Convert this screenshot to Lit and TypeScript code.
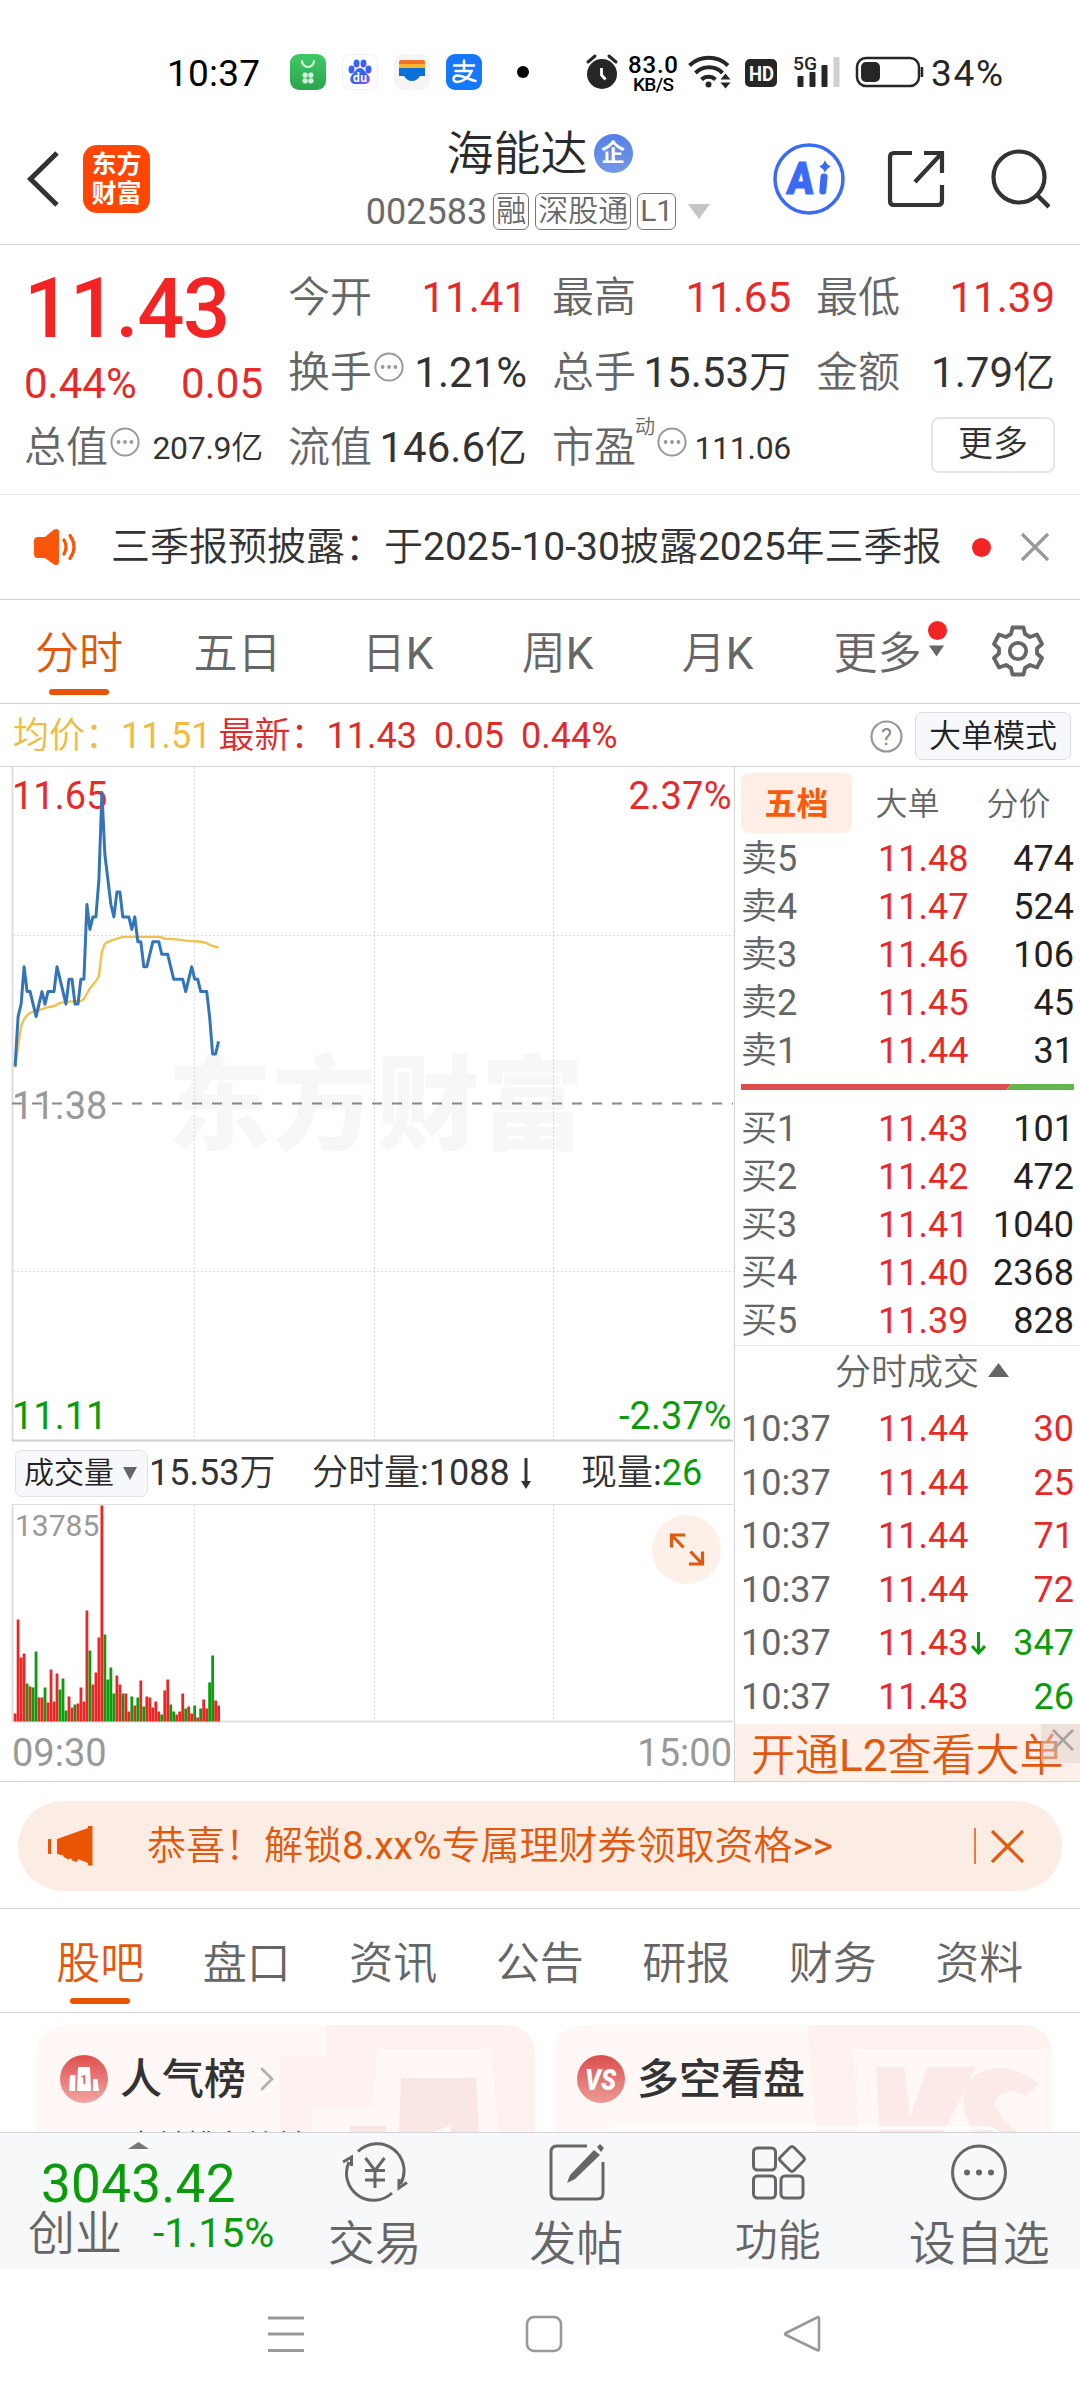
import { LitElement, html, svg, css } from "lit";
import { customElement } from "lit/decorators.js";
import { classMap } from "lit/directives/class-map.js";

const ASKS = [["卖5", "11.48", "474"], ["卖4", "11.47", "524"], ["卖3", "11.46", "106"], ["卖2", "11.45", "45"], ["卖1", "11.44", "31"]];
const BIDS = [["买1", "11.43", "101"], ["买2", "11.42", "472"], ["买3", "11.41", "1040"], ["买4", "11.40", "2368"], ["买5", "11.39", "828"]];
const TRADES: [string, string, string, boolean, boolean][] = [
  ["10:37", "11.44", "30", true, false],
  ["10:37", "11.44", "25", true, false],
  ["10:37", "11.44", "71", true, false],
  ["10:37", "11.44", "72", true, false],
  ["10:37", "11.43", "347", false, true],
  ["10:37", "11.43", "26", false, false],
];

/* Minute prices, in cents above the previous close of 11.38. */
const PRICE = [
  3, 7, 8, 11, 9, 9, 8, 7, 8, 9, 8, 9, 9, 9, 11, 10, 9, 8, 10, 10, 8, 8, 10, 10, 16, 14, 15, 15, 18, 25, 20, 18, 16, 15,
  17, 17, 15, 15, 15, 14, 15, 13, 13, 11, 11, 12, 13, 13, 13, 12, 12, 12, 11, 10, 10, 10, 10, 9, 10, 11, 10, 10, 9, 9, 9,
  7, 4, 4, 5,
];
/* Average price as [minute, cents above close]. */
const AVERAGE = [
  [0, 2.9], [1, 4.6], [2, 6.2], [3, 6.8], [4, 7.1], [5, 7.3], [7, 7.45], [9, 7.6], [11, 7.75], [13, 7.85], [15, 8.1],
  [18, 8.2], [22, 8.25], [23, 8.4], [24, 8.85], [25, 9.25], [27, 9.85], [28, 10.25], [29, 12.2], [30, 12.85], [32, 13.1],
  [34, 13.25], [36, 13.4], [40, 13.4], [48.5, 13.4], [50, 13.25], [54, 13.2], [57, 13.1], [62, 13.0], [64, 12.9],
  [66, 12.65], [68, 12.55],
];
/* Volume bar heights in pixels; negative values are falling minutes. */
const VOLUME = [
  8, 102, 64, 68, -38, 35, -34, -70, 24, 24, -34, 19, 52, 20, 48, -32, -43, -11, 25, 14, -17, 18, 34, 20, 111, -71, 37, 49,
  84, 216, -87, -42, -54, -28, 46, 37, -28, 28, 10, -25, 16, -24, 41, -15, 25, 24, 14, 20, 10, -7, 31, 42, -17, -10, 7, 10,
  28, -13, 15, 8, -16, 4, -13, 22, 13, -39, -66, 21, 16,
];

const minuteX = (i: number) => 15.1 + i * 2.993;
const priceY = (c: number) => 336.7 - c * 12.45;
const line = (pts: number[][]) => pts.map(([i, c]) => `${minuteX(i).toFixed(1)},${priceY(c).toFixed(1)}`).join(" ");

const more = html`<svg class="dots" width="30" height="30" viewBox="0 0 30 30"><circle cx="15" cy="15" r="13.6" fill="none" stroke="#999" stroke-width="2"/><g fill="#999"><circle cx="8.6" cy="15" r="1.9"/><circle cx="15" cy="15" r="1.9"/><circle cx="21.4" cy="15" r="1.9"/></g></svg>`;

@customElement("app-root")
export class AppRoot extends LitElement {
  static styles = css`
    :host {
      display: block;
      width: 1080px;
      height: 2400px;
      overflow: hidden;
      background: #fff;
      color: #333;
      font-family: Roboto, "Noto Sans CJK SC DemiLight", "Noto Sans CJK SC", sans-serif;
      font-size: 36px;
      line-height: 1;
    }
    * { box-sizing: border-box; }
    svg { display: block; flex: none; }
    .logo, .badge, .top, .levels .on, .watermark { font-family: Roboto, "Noto Sans CJK SC", sans-serif; }
    .red { color: #e62a2a; }
    .green { color: #0a9c0a; }
    .grow { flex: 1; }

    .status { height: 118px; }
    .header { height: 127px; display: flex; align-items: center; border-bottom: 1px solid #d4d4d4; padding: 0 28px 5px 26px; }
    .logo { margin-left: 23px; width: 67px; height: 68px; border-radius: 14px; background: #ff4605; color: #fff; display: flex; flex-direction: column; align-items: center; justify-content: center; font-size: 25px; font-weight: 700; line-height: 29px; }
    .heading { width: 620px; display: flex; flex-direction: column; align-items: center; padding: 4px 0 0 156px; }
    .name { display: flex; align-items: center; font-size: 47px; line-height: 60px; color: #2a2a2a; gap: 6px; margin-left: 3px; height: 62px; }
    .badge { width: 39px; height: 39px; border-radius: 50%; background: linear-gradient(#5480e8, #7398e6); color: #fff; font-size: 24px; line-height: 38px; text-align: center; font-weight: 700; }
    .code { display: flex; align-items: center; height: 54px; color: #6a6a6a; gap: 6px; white-space: nowrap; }
    .tag { font-size: 30px; border: 1.5px solid #777; border-radius: 6px; height: 37px; line-height: 34px; padding: 0 2px; }
    .code svg { margin-left: 6px; }
    .ai { margin-left: 3px; }
    .share { margin-left: 41px; }
    .search { margin-left: 44px; }

    .quote { height: 250px; border-bottom: 1px solid #e6e6e6; padding: 15px 26px 0 24px; display: grid; grid-template-columns: repeat(4, 239px); column-gap: 25px; grid-template-rows: repeat(3, 75px); font-size: 42px; }
    .lead { grid-row: span 2; display: flex; flex-direction: column; }
    .last { font-size: 83px; font-weight: 500; color: #f32424; line-height: 90px; height: 98px; padding-top: 4px; margin-left: 0; letter-spacing: -1.4px; }
    .pair, .cell { display: flex; justify-content: space-between; align-items: center; }
    .pair { height: 52px; }
    .cell .label { display: flex; align-items: center; color: #666; }
    .cell .value { white-space: nowrap; }
    .cell .dots { margin: -11px 0 0 2px; }
    .cell .sm { font-size: 32px; letter-spacing: -0.3px; }
    .cell sup { font-size: 20px; line-height: 20px; margin: -42px 0 0 -1px; }
    .cell.end { justify-content: flex-end; }
    .button { width: 124px; height: 56px; border: 2px solid #e6e6e6; border-radius: 8px; font-size: 35px; line-height: 52px; text-align: center; margin-top: -6px; }

    .notice { height: 105px; border-bottom: 1px solid #d4d4d4; display: flex; align-items: center; padding: 0 30px 0 34px; font-size: 39px; }
    .notice .msg { margin-left: 34px; white-space: nowrap; }
    .notice .dot { width: 19px; height: 19px; border-radius: 50%; background: #f32424; margin: 0 29px 0 auto; }

    .tabs { height: 104px; border-bottom: 1px solid #d4d4d4; display: flex; font-size: 44px; color: #666; }
    .upper { padding-left: 0; margin-left: -1px; width: 1081px; }
    .tab { width: 160px; position: relative; line-height: 108px; text-align: center; white-space: nowrap; flex: none; }
    .upper .tab:nth-child(n + 2) { left: -1.5px; }
    .tab.on { color: #e0590f; }
    .tab.on::after { content: ""; position: absolute; left: 50%; margin-left: -30px; top: 89px; width: 60px; height: 6px; border-radius: 3px; background: #e85405; }
    .tab .mark { position: absolute; left: 130px; top: 20px; }
    .gear { margin: 25px 0 0 33px; }
    .tabs.lower { padding-left: 27px; }
    .tabs.lower .tab { width: 146.5px; line-height: 110px; }

    .info { height: 63px; border-bottom: 1px solid #d4d4d4; display: flex; align-items: center; padding: 2px 9px 0 13px; color: #df2b2b; white-space: pre; }
    .info .avg { color: #f0bb40; margin-right: 7px; }
    .info .num { margin-right: 17px; }
    .info .mode { margin-left: 12px; width: 156px; height: 48px; border: 1.5px solid #dcdee3; background: #f7f8fb; border-radius: 7px; font-size: 32px; line-height: 46px; text-align: center; color: #222; }

    .main { height: 1015px; display: flex; border-bottom: 1px solid #d4d4d4; }
    .charts { width: 734px; display: flex; flex-direction: column; }
    .bar { height: 61px; display: flex; align-items: center; padding-left: 15px; white-space: nowrap; padding-top: 1px; }
    .pick { width: 133px; height: 47px; border: 1.5px solid #dfe1e7; background: #f7f8fb; border-radius: 7px; display: flex; align-items: center; font-size: 30px; padding-left: 8px; gap: 9px; color: #222; }
    .bar .total { width: 164px; padding-left: 1px; }
    .bar .minute { width: 269px; display: flex; align-items: center; gap: 10px; }
    .axis { display: flex; justify-content: space-between; font-size: 38px; color: #999; padding: 11px 2px 0 12px; line-height: 39px; }
    .side { width: 346px; border-left: 1px solid #d4d4d4; display: flex; flex-direction: column; }
    .levels { display: flex; height: 70px; padding: 6px 0 0 6px; font-size: 32px; line-height: 63px; color: #666; text-align: center; }
    .levels div { width: 111px; height: 60px; }
    .levels .on { background: #ffeee6; color: #fb5a0c; font-weight: 700; border-radius: 8px; }
    .row { height: 48px; display: grid; grid-template-columns: 130px 105px 98px; align-items: center; padding-left: 6px; color: #666; }
    .row .p { padding-left: 7px; display: flex; align-items: center; gap: 3px; }
    .row .q { text-align: right; color: #222; }
    .row .q.red { color: #e62a2a; }
    .row .q.green { color: #0a9c0a; }
    .ratio { margin: 9px 0 15px 6px; }
    .bids { height: 241px; border-bottom: 1px solid #e6e6e6; }
    .deal { height: 58px; display: flex; align-items: center; gap: 9px; padding: 0 0 2px 100px; color: #666; }
    .deal svg { margin-top: -6px; }
    .trades .row { height: 53.6px; }
    .upsell { margin-top: auto; height: 59px; background: #fdf0ea; color: #e0590f; font-size: 44px; line-height: 64px; padding-left: 16px; position: relative; white-space: nowrap; overflow: hidden; }
    .upsell svg { position: absolute; right: 0; top: 0; }

    .promo { height: 127px; border-bottom: 1px solid #d4d4d4; padding: 19px 18px; }
    .pill { height: 90px; border-radius: 45px; background: #fcede4; color: #e0590f; font-size: 39px; display: flex; align-items: center; padding: 0 38px 0 30px; white-space: nowrap; }
    .pill .txt { margin-left: 54px; }

    .cards { height: 120px; overflow: hidden; border-bottom: 1px solid #cfd2d6; padding: 12px 28px 0 36px; display: flex; gap: 18px; }
    .card { width: 499px; height: 190px; border-radius: 28px; background: #fff8f6; position: relative; overflow: hidden; flex: none; }
    .card .art { position: absolute; left: 0; top: 0; }
    .card .top { position: relative; display: flex; align-items: center; padding: 30px 0 0 24px; height: 78px; font-size: 42px; font-weight: 500; }
    .card .top .t { margin: 0 14px 0 12px; padding-top: 2px; }
    .card .sub { position: relative; font-size: 30px; line-height: 30px; padding: 28px 0 0 90px; color: #444; }

    .nav { height: 136px; background: #f7f8fa; display: flex; color: #666; }
    .index { width: 274px; padding: 9px 0 0 28px; }
    .index .tri { margin: 0 0 0 100px; }
    .index .pt { font-size: 53px; line-height: 53px; margin: 9px 0 0 13px; letter-spacing: 0.3px; }
    .index .chg { display: flex; align-items: center; font-size: 47px; height: 48px; gap: 31px; white-space: nowrap; margin-top: -2px; }
    .index .chg .green { font-size: 41px; padding-top: 1px; }
    .item { width: 201.5px; display: flex; flex-direction: column; align-items: center; font-size: 47px; padding-top: 9px; white-space: nowrap; }
    .item svg { height: 60px; }
    .item span { line-height: 50px; margin-top: 17px; }
    .item .s { font-size: 43px; margin-top: 14px; }
    .sys { height: 131px; display: flex; padding: 46px 0 0 267px; gap: 220px; }
  `;

  private statusBar() {
    return html`<svg class="status" width="1080" height="118" viewBox="0 0 1080 118" font-family="Roboto, sans-serif">
      <defs>
        <linearGradient id="g1" x1="0" y1="0" x2="0" y2="1"><stop offset="0" stop-color="#3fca66"/><stop offset="1" stop-color="#2aa54c"/></linearGradient>
        <linearGradient id="g2" x1="0" y1="0" x2="1" y2="1"><stop offset="0" stop-color="#1d7cf2"/><stop offset=".6" stop-color="#3a5cf5"/><stop offset="1" stop-color="#b04be8"/></linearGradient>
      </defs>
      <text x="167" y="86" font-size="37" textLength="93" fill="#000">10:37</text>
      <rect x="290" y="54" width="36" height="36" rx="9" fill="url(#g1)"/>
      <path d="M302 61a6 6 0 0 0 12 0" fill="none" stroke="#d9f7e2" stroke-width="2.2" stroke-linecap="round"/>
      <g fill="#d2f3dc"><rect x="302.5" y="72.5" width="5.2" height="5.2" rx="2"/><rect x="308.3" y="72.5" width="5.2" height="5.2" rx="2"/><rect x="302.5" y="78.3" width="5.2" height="5.2" rx="2"/><rect x="308.3" y="78.3" width="5.2" height="5.2" rx="2"/></g>
      <rect x="342.5" y="54.5" width="35" height="35" rx="9" fill="#fff" stroke="#f0f0f0"/>
      <g fill="url(#g2)"><ellipse cx="351.5" cy="69.5" rx="3" ry="4"/><ellipse cx="356.5" cy="63.5" rx="3" ry="4"/><ellipse cx="363.5" cy="63.5" rx="3" ry="4"/><ellipse cx="368.5" cy="69.5" rx="3" ry="4"/><path d="M360 68c-4 0-5 4-8 7-3 3-2 9 3 9h10c5 0 6-6 3-9-3-3-4-7-8-7z"/></g>
      <text x="353" y="82" font-size="12" font-weight="700" fill="#fff" textLength="14">du</text>
      <rect x="394" y="54" width="36" height="36" rx="9" fill="#f5f5f6"/>
      <path d="M399 63v-1q0-2 2-2h22q2 0 2 2v2h-26z" fill="#f3702c"/><path d="M399 64h26v4h-26z" fill="#fdb52f"/><path d="M399 68h26v8h-5q-3 5-8 5t-8-5h-5z" fill="#0f6fd8"/>
      <rect x="446" y="54" width="36" height="36" rx="9" fill="#1677ff"/>
      <g fill="none" stroke="#fff" stroke-width="2.6" stroke-linecap="round"><path d="M454 65.5h20M464 60.5v10M455.5 71h16c-2 6-9 11-14 11-5.5 0-5-6.5 0-6.5 5 0 12 4 18 5.500"/></g>
      <circle cx="523" cy="72" r="6" fill="#000"/>
      <g stroke="#262626" stroke-width="3" stroke-linecap="round"><path d="M588 62l7-6M616 62l-7-6"/></g>
      <circle cx="602" cy="74" r="15" fill="#262626"/><path d="M601.5 68v7l4 4.5" fill="none" stroke="#fff" stroke-width="2.8"/>
      <text x="628" y="72.5" font-size="24" font-weight="500" textLength="50" fill="#000">83.0</text>
      <text x="633" y="90.5" font-size="19" font-weight="500" textLength="41" fill="#000">KB/S</text>
      <g fill="none" stroke="#262626" stroke-width="4"><path d="M689.5 65.5a28 28 0 0 1 38.5 0"/><path d="M695.5 73a19 19 0 0 1 27 0"/><path d="M701.5 79.5a10 10 0 0 1 14 0"/></g>
      <circle cx="708.5" cy="84.5" r="3" fill="#262626"/><path d="M720.500 79.5l5-6 5 6zM720.500 82.5l5 6 5-6z" fill="#262626"/>
      <rect x="745" y="59" width="32" height="28" rx="5" fill="#262626"/>
      <text x="749" y="80.5" font-size="21" font-weight="700" textLength="25" lengthAdjust="spacingAndGlyphs" fill="#fff">HD</text>
      <text x="793" y="69.5" font-size="19" font-weight="500" textLength="24" lengthAdjust="spacingAndGlyphs" fill="#262626">5G</text>
      <g fill="#262626"><rect x="797.5" y="76" width="6" height="11" rx="1"/><rect x="809.5" y="72" width="6" height="15" rx="1"/><rect x="821.5" y="65" width="6" height="22" rx="1"/></g><rect x="833.5" y="57" width="6" height="30" rx="1" fill="#d0d0d0"/>
      <rect x="857" y="58" width="62" height="28" rx="9" fill="none" stroke="#262626" stroke-width="2.5"/><rect x="861" y="62" width="19" height="20" rx="5" fill="#262626"/><path d="M922 67v10" stroke="#262626" stroke-width="2.5"/>
      <text x="931" y="86" font-size="37" textLength="72" fill="#262626">34%</text>
    </svg>`;
  }

  private priceChart() {
    return html`<svg width="734" height="675" viewBox="0 0 734 675" font-size="38">
      <text class="watermark" x="168" y="375" font-size="103" font-weight="900" textLength="416" fill="#f7f7f7">东方财富</text>
      <g stroke="#d9d9d9" stroke-width="1" stroke-dasharray="2 2"><path d="M194.5 0V673M374.5 0V673M553.5 0V673M13 168.5H734M13 504.5H734"/></g>
      <path d="M12.5 0V673" stroke="#dedede" stroke-width="2"/><path d="M12 673.5H733" stroke="#d0d0d0" stroke-width="2"/>
      <path d="M12 336.5H733" stroke="#888" stroke-width="2" stroke-dasharray="10 10"/>
      <text x="12" y="41.5" fill="#e62a2a">11.65</text>
      <text x="731.5" y="41.5" fill="#e62a2a" text-anchor="end" textLength="103">2.37%</text>
      <text x="12" y="351.5" fill="#999">11.38</text>
      <text x="12" y="661.5" fill="#0a9c0a">11.11</text>
      <text x="731.5" y="661.5" fill="#0a9c0a" text-anchor="end">-2.37%</text>
      <polyline points=${line(AVERAGE)} fill="none" stroke="#f2c150" stroke-width="2.4"/>
      <polyline points=${line(PRICE.map((c, i) => [i, c]))} fill="none" stroke="#3375b8" stroke-width="3" stroke-linejoin="round"/>
    </svg>`;
  }

  private volumeChart() {
    return html`<svg width="734" height="220" viewBox="0 0 734 220" font-size="30">
      <path d="M12 1.5H733" stroke="#dedede"/><path d="M12.5 1V219" stroke="#dedede" stroke-width="2"/><path d="M12 218.5H733" stroke="#e2e2e2" stroke-width="2"/>
      <path d="M194.5 2V217M374.5 2V217M553.5 2V217" stroke="#d9d9d9" stroke-dasharray="2 2"/>
      <text x="15" y="32.5" fill="#999">13785</text>
      ${VOLUME.map((v, i) => svg`<rect x=${13.7 + i * 2.993} y=${218.5 - Math.abs(v)} width="2.8" height=${Math.abs(v)} fill=${v > 0 ? "#ee2525" : "#0a9c0a"}/>`)}
      <circle cx="686.5" cy="46.5" r="34.5" fill="#fdf0e8"/>
      <g fill="none" stroke="#e0590f" stroke-width="3.2"><path d="M671.5 44.500V32H685M672 32.500l11.5 12M702.5 48.500V61H689M702 60.500L690.5 48.500"/></g>
    </svg>`;
  }

  private cell(label: unknown, value: unknown, cls = "") {
    return html`<div class="cell"><span class="label">${label}</span><span class="value ${cls}">${value}</span></div>`;
  }

  private depth(rows: string[][]) {
    return rows.map(([l, p, q]) => html`<div class="row"><span>${l}</span><span class="p red">${p}</span><span class="q">${q}</span></div>`);
  }

  render() {
    return html`
      ${this.statusBar()}
      <div class="header">
        <svg width="34" height="58" viewBox="0 0 34 58"><path d="M31 3L4.5 29 31 55" fill="none" stroke="#333" stroke-width="5"/></svg>
        <div class="logo"><span>东方</span><span>财富</span></div>
        <div class="heading">
          <div class="name">海能达<span class="badge">企</span></div>
          <div class="code">002583<span class="tag">融</span><span class="tag">深股通</span><span class="tag">L1</span><svg width="22" height="15" viewBox="0 0 22 15"><path d="M0 0h22L11 15z" fill="#c4c4c4"/></svg></div>
        </div>
        <svg class="ai" width="72" height="72" viewBox="0 0 72 72"><circle cx="36" cy="36" r="34" fill="none" stroke="#3b6bf6" stroke-width="3.5"/><g transform="translate(4.500 0) skewX(-5)"><text x="13" y="51" font-size="45" font-weight="900" textLength="27" lengthAdjust="spacingAndGlyphs" fill="#3b6bf6" stroke="#3b6bf6" stroke-width="1">A</text></g><path d="M51 34l-1.200 14" stroke="#3b6bf6" stroke-width="7" stroke-linecap="round"/><path d="M52 17q1.5 5 6 6.5-4.500 1.500-6 6.500-1.500-5-6-6.500 4.500-1.500 6-6.500z" fill="#3b6bf6"/></svg>
        <svg class="share" width="60" height="60" viewBox="0 0 60 60"><path d="M26 4H8q-4 0-4 4v44q0 4 4 4h44q4 0 4-4V36M38 4h18v20M56 4L29 33" fill="none" stroke="#333" stroke-width="4.2"/></svg>
        <svg class="search" width="60" height="62" viewBox="0 0 60 62"><circle cx="29" cy="29" r="25.5" fill="none" stroke="#333" stroke-width="4.2"/><path d="M47 47l12 12" stroke="#333" stroke-width="4.5"/></svg>
      </div>

      <div class="quote">
        <div class="lead"><div class="last">11.43</div><div class="pair red"><span>0.44%</span><span>0.05</span></div></div>
        ${this.cell("今开", "11.41", "red")} ${this.cell("最高", "11.65", "red")} ${this.cell("最低", "11.39", "red")}
        ${this.cell(html`换手${more}`, "1.21%")} ${this.cell("总手", "15.53万")} ${this.cell("金额", "1.79亿")}
        ${this.cell(html`总值${more}`, "207.9亿", "sm")} ${this.cell("流值", "146.6亿")} ${this.cell(html`市盈<sup>动</sup>${more}`, "111.06", "sm")}
        <div class="cell end"><div class="button">更多</div></div>
      </div>

      <div class="notice">
        <svg width="43" height="38" viewBox="0 0 43 38"><path d="M4 9h7L20 1.5q5-2 5 3v29q0 5-5 3L11 30H4q-4 0-4-4V13q0-4 4-4z" fill="#f9560a"/><g fill="none" stroke="#f9560a" stroke-width="3.2" stroke-linecap="round"><path d="M30 12q4 7 0 14M36 7.5q8 11.500 0 23"/></g></svg>
        <span class="msg">三季报预披露：于2025-10-30披露2025年三季报</span>
        <span class="dot"></span>
        <svg width="30" height="30" viewBox="0 0 30 30"><path d="M2 2l26 26M28 2L2 28" stroke="#999" stroke-width="3.2"/></svg>
      </div>

      <div class="tabs upper">
        ${["分时", "五日", "日K", "周K", "月K"].map((t, i) => html`<div class=${classMap({ tab: true, on: i === 0 })}>${t}</div>`)}
        <div class="tab">更多<svg class="mark" width="20" height="38" viewBox="0 0 20 38"><circle cx="9.500" cy="10.5" r="9.5" fill="#f32424"/><path d="M1 25.5h15l-7.5 11z" fill="#666"/></svg></div>
        <svg class="gear" width="52" height="52" viewBox="0 0 52 52" fill="none" stroke="#666" stroke-width="3.8" stroke-linejoin="round"><path d="M20.5 2.5h11l1.5 6.5 5 3 7-2.500 5 9.500-5 4.500v5l5 4.500-5 9.500-7-2.500-5 3-1.500 6.500h-11l-1.500-6.500-5-3-7 2.500-5-9.500 5-4.500v-5l-5-4.500 5-9.500 7 2.500 5-3z"/><circle cx="26" cy="26" r="8.2"/></svg>
      </div>

      <div class="info">
        <span class="avg">均价：11.51</span><span>最新：</span><span class="num">11.43</span><span class="num">0.05</span><span>0.44%</span>
        <span class="grow"></span>
        <svg width="33" height="33" viewBox="0 0 33 33"><circle cx="16.5" cy="16.5" r="15" fill="none" stroke="#999" stroke-width="2.2"/><text x="16.5" y="24.5" font-size="23" text-anchor="middle" fill="#888">?</text></svg>
        <span class="mode">大单模式</span>
      </div>

      <div class="main">
        <div class="charts">
          ${this.priceChart()}
          <div class="bar">
            <div class="pick">成交量<svg width="14" height="13" viewBox="0 0 14 13"><path d="M0 0h14L7 13z" fill="#666"/></svg></div>
            <div class="total">15.53万</div>
            <div class="minute">分时量:1088<svg width="12" height="33" viewBox="0 0 12 33"><path d="M6 1v26" stroke="#333" stroke-width="3"/><path d="M1 24h10L6 32z" fill="#333"/></svg></div>
            <div>现量:<span class="green">26</span></div>
          </div>
          ${this.volumeChart()}
          <div class="axis"><span>09:30</span><span>15:00</span></div>
        </div>
        <div class="side">
          <div class="levels"><div class="on">五档</div><div>大单</div><div>分价</div></div>
          <div class="asks">${this.depth(ASKS)}</div>
          <svg class="ratio" width="333" height="6" viewBox="0 0 333 6"><path d="M0 0h270l-5 6H0z" fill="#dc4f4f"/><path d="M270 0h63v6h-68z" fill="#61b64c"/></svg>
          <div class="bids">${this.depth(BIDS)}</div>
          <div class="deal">分时成交<svg width="21" height="14" viewBox="0 0 21 14"><path d="M10.5 0L21 14H0z" fill="#666"/></svg></div>
          <div class="trades">
            ${TRADES.map(([t, p, q, up, down]) => html`<div class="row"><span>${t}</span><span class="p red">${p}${down ? html`<svg width="15" height="23" viewBox="0 0 15 23"><path d="M7.5 0v21M1 14l6.5 7L14 14" fill="none" stroke="#0a9c0a" stroke-width="3"/></svg>` : ""}</span><span class=${classMap({ q: true, red: up, green: !up })}>${q}</span></div>`)}
          </div>
          <div class="upsell">开通L2查看大单<svg width="39" height="39" viewBox="0 0 39 39"><rect width="39" height="39" fill="#e0d0ca" fill-opacity=".5"/><path d="M12 6l20 20M32 6L12 26" stroke="#a9a19d" stroke-width="2.5"/></svg></div>
        </div>
      </div>

      <div class="promo"><div class="pill">
        <svg width="45" height="40" viewBox="0 0 45 40" fill="#ea5504"><path d="M0 13h3v15H0zM9 13l31-11V0h4.5v39.5H40V37l-10-4-1 3-5-1.500-1-2.500-2.500 1.500-5-2.500v-1.500L9 28z"/></svg>
        <span class="txt">恭喜！解锁8.xx%专属理财券领取资格&gt;&gt;</span>
        <span class="grow"></span>
        <svg width="50" height="38" viewBox="0 0 50 38"><path d="M1 1v36" stroke="#e0590f" stroke-width="1.5"/><path d="M18 4l31 31M49 4L18 35" stroke="#e85a10" stroke-width="3.2"/></svg>
      </div></div>

      <div class="tabs lower">
        ${["股吧", "盘口", "资讯", "公告", "研报", "财务", "资料"].map((t, i) => html`<div class=${classMap({ tab: true, on: i === 0 })}>${t}</div>`)}
      </div>

      <div class="cards">
        <div class="card">
          <svg class="art" width="499" height="110" viewBox="0 0 499 110"><path d="M290 0h209v110h-36l-8-86H341l-5 58h-59l-2 28h-31V32h46z" fill="#fdf2f0"/><path d="M365 53h75l3 57h-80zM314 101h36v9h-36z" fill="#fae6e4"/><path d="M390 110l25-10v10z" fill="#fff8f6"/></svg>
          <div class="top">
            <svg width="48" height="48" viewBox="0 0 48 48"><defs><linearGradient id="r1" x1="0" y1="0" x2="0" y2="1"><stop offset="0" stop-color="#de4f4c"/><stop offset="1" stop-color="#f2a5a2"/></linearGradient></defs><circle cx="24" cy="24" r="24" fill="url(#r1)"/><path d="M10 20h5.5l-.5 16H9zM18 12h12l1 24H17zM33 24h4.5L39 36h-6z" fill="#fff"/><text x="20.5" y="28.5" font-size="12" font-weight="700" fill="#df5f5c">1</text></svg>
            <span class="t">人气榜</span>
            <svg width="14" height="24" viewBox="0 0 14 24"><path d="M2 2l10 10L2 22" fill="none" stroke="#b5afad" stroke-width="2.8" stroke-linecap="round"/></svg>
          </div>
          <div class="sub">当前排名较前一日</div>
        </div>
        <div class="card">
          <svg class="art" width="499" height="110" viewBox="0 0 499 110"><path d="M255 0h244v24H300l5 86h-42z" fill="#fdf2f0"/><path d="M323 42h28l6 50 18-50h48l-34 68h-62zM486 58q-45-30-72 0-10 20 8 52h46q-45-36-12-44 12 0 16 6z" fill="#fbeae8"/><path d="M52 110q2-7 12-7h370q8 0 12 7" fill="none" stroke="#fff" stroke-width="3"/></svg>
          <div class="top">
            <svg width="48" height="48" viewBox="0 0 48 48"><defs><linearGradient id="r2" x1="0" y1="0" x2="0" y2="1"><stop offset="0" stop-color="#d9504d"/><stop offset="1" stop-color="#ee9a97"/></linearGradient></defs><circle cx="24" cy="24" r="24" fill="url(#r2)"/><text x="8" y="34.5" font-size="29" font-weight="900" font-style="italic" textLength="31" lengthAdjust="spacingAndGlyphs" fill="#fff">VS</text></svg>
            <span class="t">多空看盘</span>
          </div>
        </div>
      </div>

      <div class="nav">
        <div class="index">
          <svg class="tri" width="21" height="7" viewBox="0 0 21 7"><path d="M10.5 0L21 7H0z" fill="#777"/></svg>
          <div class="pt green">3043.42</div>
          <div class="chg"><span>创业</span><span class="green">-1.15%</span></div>
        </div>
        <div class="item"><svg width="68" viewBox="0 0 68 60" fill="none" stroke="#666" stroke-width="3"><path d="M17 9.500A27 27 0 0 1 59.500 42M51 51A27 27 0 0 1 8 20"/><path d="M2 20l8.500-5v9M66 40.500l-8 5.500v-9"/><path d="M24.500 16L34 28.500 43.500 16M34 28v18M24 28.500h20M24 38h20"/></svg><span>交易</span></div>
        <div class="item"><svg width="60" viewBox="0 0 60 60" fill="none" stroke="#666" stroke-width="3"><path d="M41 4H11Q5 4 5 10v41q0 6 6 6h40q6 0 6-6V20"/><path d="M48 8l6 5-25 24-8 4 3-8z" fill="#666" stroke="none"/><path d="M51 5l3-3 4 4-3 4z" fill="#666" stroke="none"/></svg><span>发帖</span></div>
        <div class="item"><svg width="60" viewBox="0 0 60 60" fill="none" stroke="#666" stroke-width="3"><rect x="5.5" y="6" width="22" height="22" rx="4"/><rect x="5.5" y="34" width="22" height="22" rx="4"/><rect x="33" y="34" width="22" height="22" rx="4"/><path d="M42 5.500q2-2 4 0l9.500 9.500q2 2 0 4l-9.500 9.500q-2 2-4 0l-9.500-9.500q-2-2 0-4z"/></svg><span class="s">功能</span></div>
        <div class="item"><svg width="60" viewBox="0 0 60 60"><circle cx="30" cy="30.5" r="26.5" fill="none" stroke="#666" stroke-width="3"/><g fill="#666"><circle cx="18" cy="30.5" r="3"/><circle cx="30" cy="30.5" r="3"/><circle cx="42" cy="30.5" r="3"/></g></svg><span>设自选</span></div>
      </div>
      <div class="sys">
        <svg width="38" height="38" viewBox="0 0 38 38"><path d="M1 3h36M1 19h36M1 35.5h36" stroke="#999" stroke-width="2.8"/></svg>
        <svg width="38" height="38" viewBox="0 0 38 38"><rect x="2" y="2" width="34" height="34" rx="7" fill="none" stroke="#999" stroke-width="2.6"/></svg>
        <svg width="38" height="38" viewBox="0 0 38 38"><path d="M36 4v30q0 2-2 1L3 20q-2-1 0-2L34 2.5q2-1 2 1z" fill="none" stroke="#999" stroke-width="2.6"/></svg>
      </div>
    `;
  }
}
